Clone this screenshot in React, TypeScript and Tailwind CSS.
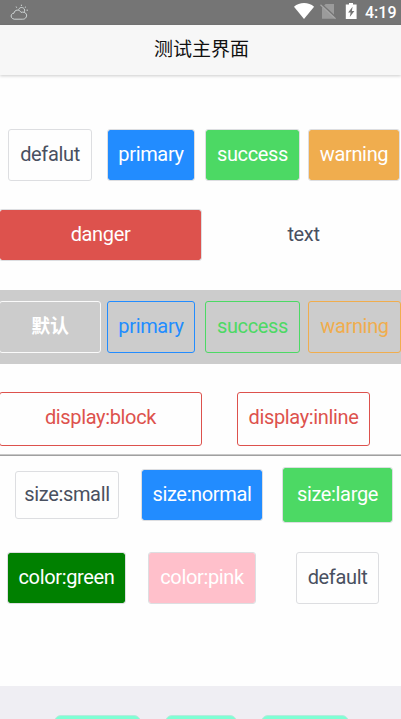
import type { ReactNode } from "react";

function Btn({ className, children }: { className: string; children?: ReactNode }) {
  return (
    <button
      className={`flex shrink-0 items-center justify-center whitespace-nowrap rounded-[3px] border pb-[2px] text-[20px] leading-none tracking-[-0.35px] ${className}`}
    >
      {children}
    </button>
  );
}

function StatusBar() {
  return (
    <div className="flex h-[25px] items-center bg-[#757575] text-white">
      <svg className="ml-[10px] h-[18px] w-[19px]" viewBox="0 0 19 18" fill="none" stroke="#d6dcdd" strokeWidth="0.9">
        <path d="M4.2 15.2C-.1 14.5.4 9.2 4 9.2 4.4 5.6 9.4 4.8 11 8.4 14.8 7.1 17.8 10.3 16.2 13.1 15.4 14.8 14 15.2 12.5 15.2Z" />
        <path d="M8.6 5.7C9.7 2 15.5 3.2 14.6 7.4L13.8 8.6M11.4.7V2M5.8 2.8l1.3.8M16 2.8l-1.2.8M16.5 6.2H18" />
      </svg>
      <svg className="ml-[264px] h-[25px] w-[24px]" viewBox="293 0 24 25">
        <path fill="white" d="M294 6.7C299.4 1.9 308.7 1.9 314.1 6.7L304 19Z" />
      </svg>
      <svg className="ml-[2px] h-[25px] w-[20px]" viewBox="319 0 20 25">
        <path fill="#9b9b9b" d="M325.6 4H334V18.7H322V7.8Z" />
        <path stroke="#757575" strokeWidth="1.7" d="m321.5 4.2 15 14" />
        <path stroke="#a7a7a7" strokeWidth="1.2" d="m320.5 4.8 15 14" />
      </svg>
      <svg className="ml-[5px] h-[25px] w-[14px]" viewBox="344 0 14 25">
        <path fill="white" fillRule="evenodd" d="M349 3h4v1.4h3.6v14.7h-10.8V4.4H349ZM352.6 6.7l-4.5 5.8h2.5l-.8 4.5 4.6-6h-2.5Z" />
      </svg>
      <span className="ml-[7px] text-[16px] font-medium leading-none">4:19</span>
    </div>
  );
}

export default function App() {
  return (
    <div className="flex h-[719px] w-[401px] flex-col overflow-hidden bg-[#fefefe] font-['Roboto','Noto_Sans_CJK_SC',sans-serif]">
      <StatusBar />
      <header className="z-10 flex h-[50px] shrink-0 items-center justify-center bg-[#f7f7f7] pb-[2px] pl-[2px] text-[19px] leading-none text-[#111] shadow-[0_1px_3px_rgba(0,0,0,0.2)]">
        <h1>测试主界面</h1>
      </header>

      <section className="mt-[54px] flex h-[52px] shrink-0 pl-[8px]">
        <Btn className="w-[84px] border-[#dddee1] text-[#495060]">defalut</Btn>
        <Btn className="ml-[15px] w-[88px] border-[#dddee1] bg-[#228cff] bg-clip-padding text-white">primary</Btn>
        <Btn className="ml-[10px] w-[95px] border-[#dddee1] bg-[#4cd964] bg-clip-padding text-white">success</Btn>
        <Btn className="ml-[8px] w-[92px] border-[#dddee1] bg-[#f0ad4e] bg-clip-padding text-white">warning</Btn>
      </section>

      <section className="mt-[28px] flex h-[52px] shrink-0">
        <Btn className="-ml-px w-[203px] border-[#dddee1] bg-[#dd524d] bg-clip-padding text-white">danger</Btn>
        <Btn className="w-[203px] border-transparent text-[#495060]">text</Btn>
      </section>

      <section className="mt-[29px] flex h-[74px] shrink-0 bg-[#cccccc] pb-[11px] pt-[11px]">
        <Btn className="-ml-px w-[102px] border-[#fafafa] font-bold text-white">
          <span className="text-[19px]">默认</span>
        </Btn>
        <Btn className="ml-[6px] w-[88px] border-[#228cff] text-[#228cff]">primary</Btn>
        <Btn className="ml-[10px] w-[95px] border-[#4cd964] text-[#4cd964]">success</Btn>
        <Btn className="ml-[8px] w-[93px] border-[#f0ad4e] text-[#f0ad4e]">warning</Btn>
      </section>

      <section className="mt-[28px] flex h-[54px] shrink-0">
        <Btn className="-ml-px w-[203px] border-[#dd524d] pb-[4px] text-[#dd524d]">display:block</Btn>
        <Btn className="ml-[35px] w-[133px] border-[#dd524d] pb-[4px] text-[#dd524d]">display:inline</Btn>
      </section>

      <hr className="mt-[8px] h-[2px] shrink-0 border-0 border-b border-t border-b-[#a0a0a0] border-t-[#c8c8c8]" />

      <section className="mt-[11px] flex h-[56px] shrink-0 items-center pl-[15px]">
        <Btn className="h-[48px] w-[104px] border-[#dddee1] text-[#495060]">size:small</Btn>
        <Btn className="ml-[22px] h-[52px] w-[122px] border-[#dddee1] bg-[#228cff] bg-clip-padding text-white">size:normal</Btn>
        <Btn className="ml-[19px] h-[56px] w-[111px] border-[#dddee1] bg-[#4cd964] bg-clip-padding text-white">size:large</Btn>
      </section>

      <section className="mt-[29px] flex h-[52px] shrink-0 pl-[7px]">
        <Btn className="w-[119px] border-[#dddee1] bg-[#008000] bg-clip-padding text-white">color:green</Btn>
        <Btn className="ml-[22px] w-[108px] border-[#dddee1] bg-[#ffc0cb] bg-clip-padding text-white">color:pink</Btn>
        <Btn className="ml-[40px] w-[83px] border-[#dddee1] text-[#495060]">default</Btn>
      </section>

      <footer className="mt-[82px] flex h-[33px] shrink-0 items-start overflow-hidden bg-[#efeef3] pl-[54px] pt-[29px]">
        <div className="h-[30px] w-[87px] shrink-0 rounded-[7px] border border-[#b6ebdc] bg-[#7fffd4]" />
        <div className="ml-[24px] h-[30px] w-[72px] shrink-0 rounded-[7px] border border-[#b6ebdc] bg-[#7fffd4]" />
        <div className="ml-[24px] h-[30px] w-[88px] shrink-0 rounded-[7px] border border-[#b6ebdc] bg-[#7fffd4]" />
      </footer>
    </div>
  );
}
